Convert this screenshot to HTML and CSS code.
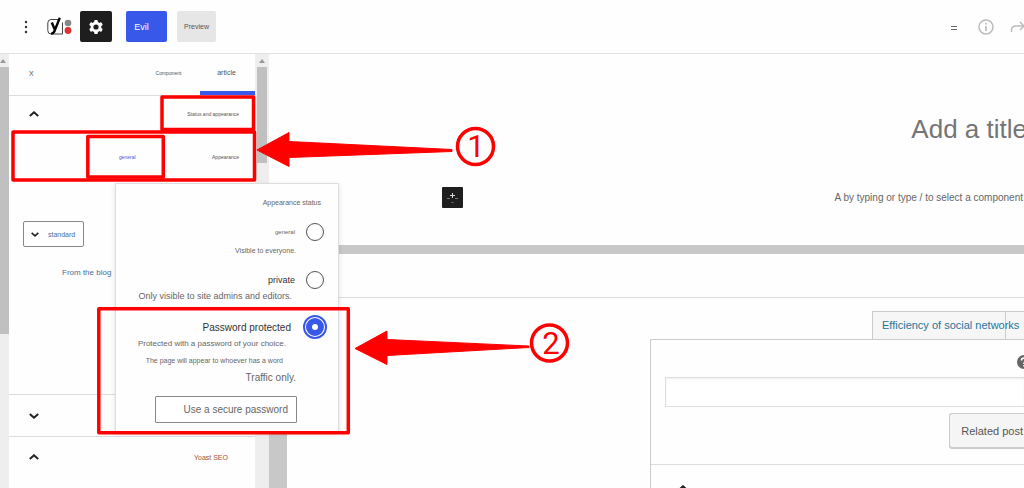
FILE: index.html
```
<!DOCTYPE html>
<html lang="en">
<head>
<meta charset="utf-8">
<meta name="viewport" content="width=device-width, initial-scale=1">
<title>Editor</title>
<link rel="stylesheet" href="styles.css">
</head>
<body>
<div class="app">
  <header class="topbar">
    <button class="icon-btn more" aria-label="More"><svg width="6" height="16" viewBox="0 0 6 16"><g fill="#333"><circle cx="3" cy="3" r="1.2"/><circle cx="3" cy="8" r="1.2"/><circle cx="3" cy="13" r="1.2"/></g></svg></button>
    <button class="icon-btn yoast" aria-label="Yoast"><svg width="26" height="20" viewBox="0 0 26 20"><path d="M11 2.500H4Q0.800 2.500 0.800 6V13.500Q0.800 17 4 17H15.500V5.500" fill="none" stroke="#444" stroke-width="1"/><path d="M4.800 5.500L7.600 12.200" fill="none" stroke="#000" stroke-width="2.400"/><path d="M12.800 0.800L7.900 13Q7.200 16 4.200 16.800" fill="none" stroke="#000" stroke-width="2.400"/><circle cx="21" cy="6" r="3.300" fill="#888"/><circle cx="21" cy="13.500" r="3.400" fill="#dc3232"/></svg></button>
    <button class="icon-btn gear" aria-label="Settings"><svg width="16" height="16" viewBox="0 0 16 16"><g fill="#fff"><circle cx="8" cy="8" r="5.400"/><rect x="6.200" y="1" width="3.600" height="14" rx="1"/><rect x="6.200" y="1" width="3.600" height="14" rx="1" transform="rotate(60 8 8)"/><rect x="6.200" y="1" width="3.600" height="14" rx="1" transform="rotate(120 8 8)"/></g><circle cx="8" cy="8" r="2.600" fill="#1e1e1e"/></svg></button>
    <button class="publish">Evil</button>
    <button class="preview">Preview</button>
    <div class="tools">
      <button class="icon-btn" aria-label="Outline"><svg width="8" height="8" viewBox="0 0 8 8"><path d="M1 3.500H7M1 6.500H7" stroke="#666"/></svg></button>
      <button class="icon-btn" aria-label="Info"><svg width="16" height="16" viewBox="0 0 16 16"><circle cx="8" cy="8" r="7" fill="none" stroke="#bbb" stroke-width="1.500"/><path d="M8 7V12M8 4V5.600" stroke="#bbb" stroke-width="1.700"/></svg></button>
      <button class="icon-btn" aria-label="Redo"><svg width="16" height="12" viewBox="0 0 16 12"><path d="M1.500 11V9Q1.500 5 6 5H14M10 1L14 5L10 9" fill="none" stroke="#bbb" stroke-width="1.500"/></svg></button>
    </div>
  </header>

  <div class="workspace">
    <div class="track page-track"><span class="up"></span><span class="thumb"></span></div>
    <aside class="sidebar">
      <nav class="tabs">
        <button class="close">X</button>
        <button class="tab small">Component</button>
        <button class="tab active">article</button>
      </nav>
      <button class="section-head">
        <svg class="chev" width="10" height="6" viewBox="0 0 10 6"><path d="M0.800 5L5 1.300L9.200 5"/></svg>
        <span>Status and appearance</span>
      </button>
      <div class="setting">
        <a href="#visibility" class="value">general</a>
        <span>Appearance</span>
      </div>
      <div class="format">
        <button class="select-btn"><svg class="chev" width="8" height="5" viewBox="0 0 10 6"><path d="M0.800 1L5 4.700L9.200 1"/></svg>standard</button>
        <p class="blog">From the blog</p>
      </div>
      <button class="section-head collapsed" aria-label="Expand section">
        <svg class="chev" width="10" height="6" viewBox="0 0 10 6"><path d="M0.800 1L5 4.700L9.200 1"/></svg>
      </button>
      <button class="section-head last">
        <svg class="chev" width="10" height="6" viewBox="0 0 10 6"><path d="M0.800 5L5 1.300L9.200 5"/></svg>
        <span class="seo">Yoast SEO</span>
      </button>
    </aside>
    <div class="track side-track"><span class="up"></span><span class="thumb"></span></div>

    <main class="main">
      <section class="canvas">
        <h1>Add a title</h1>
        <div class="block-row">
          <button class="add" aria-label="Add block"><svg width="13" height="13" viewBox="0 0 13 13"><path d="M6.500 2V7M4 4.500H9" stroke="#ddd"/><path d="M1 7.500H4M9 7.500H12M5.500 11.500H7.500" stroke="#777"/></svg></button>
          <p>A by typing or type / to select a component</p>
        </div>
      </section>
      <section class="meta">
        <div class="meta-head"></div>
        <div class="meta-body">
          <nav class="meta-tabs"><a href="#social">Efficiency of social networks</a><a href="#more" aria-label="More"></a></nav>
          <div class="panel">
            <div class="help"><svg width="14" height="14" viewBox="0 0 14 14"><circle cx="7" cy="7" r="7" fill="#666"/><path d="M4.500 5.500Q4.500 3 7 3T9.500 5.500Q9.500 7 7 8V9M7 10V11.500" fill="none" stroke="#fff" stroke-width="1.600"/></svg></div>
            <input class="keyword" type="text" aria-label="Keyword">
            <div class="related-row"><button class="related">Related post</button></div>
            <div class="panel-foot"><svg class="chev" width="10" height="6" viewBox="0 0 10 6"><path d="M0.800 5L5 1.300L9.200 5"/></svg></div>
          </div>
        </div>
      </section>
    </main>
  </div>

  <form class="popover" id="visibility">
    <h2>Appearance status</h2>
    <label class="option"><span class="t6">general</span><input type="radio" name="vis"></label>
    <p class="t7 visible">Visible to everyone.</p>
    <label class="option private"><span class="t9">private</span><input type="radio" name="vis"></label>
    <p class="t9 only">Only visible to site admins and editors.</p>
    <label class="option protected"><span class="t10">Password protected</span><input type="radio" name="vis" checked></label>
    <p class="t8 choice">Protected with a password of your choice.</p>
    <p class="t7 word">The page will appear to whoever has a word</p>
    <p class="t10 traffic">Traffic only.</p>
    <input class="password" type="text" placeholder="Use a secure password" aria-label="Use a secure password">
  </form>

  <svg class="marks" width="600" height="488" viewBox="0 0 600 488">
    <g fill="none" stroke="#f00" stroke-width="3.500" stroke-linejoin="round">
      <rect x="162" y="97" width="91.500" height="32.500"/>
      <rect x="13" y="132" width="241.500" height="48"/>
      <rect x="87.800" y="136.500" width="75.500" height="40.500"/>
      <rect x="98.800" y="308.800" width="249.500" height="124"/>
      <circle cx="475.500" cy="146.500" r="18"/>
      <circle cx="549.500" cy="343" r="18"/>
    </g>
    <g fill="#f00" stroke="#f00" stroke-linejoin="round">
      <path d="M257 150L289 132.500V141.500L452 149.500V151.500L289 157.500V166.500Z"/>
      <path d="M355 348.500L387 331V339.500L529 346V347.500L387 355.500V364.500Z"/>
    </g>
    <g class="numbers"><text x="476" y="157">1</text><text x="551" y="354">2</text></g>
  </svg>
</div>
</body>
</html>
```
FILE: styles.css
```
* { box-sizing: border-box; }
body { margin: 0; font-family: "Liberation Sans", Arial, sans-serif; background: #fefefe; color: #555; }
button, input { font: inherit; color: inherit; }
button { border: 0; background: none; padding: 0; }
h1, h2, p { margin: 0; font-weight: 400; }
a { text-decoration: none; }
svg { display: block; }
.app { position: relative; height: 100vh; overflow: hidden; display: flex; flex-direction: column; }

.topbar { flex: none; height: 54px; display: flex; align-items: center; border-bottom: 1px solid #e2e2e2; padding-left: 23px; }
.yoast { margin: 0 7px 0 18px; }
.gear { width: 32px; height: 31px; display: grid; place-items: center; background: #1e1e1e; border-radius: 2px; }
.publish { width: 41px; height: 31px; margin: 0 10px 0 14px; padding-right: 10px; background: #3858e9; color: #fff; font-size: 9px; border-radius: 2px; }
.preview { width: 39px; height: 31px; background: #e6e6e6; font-size: 7px; border-radius: 2px; }
.tools { margin-left: auto; display: flex; align-items: center; gap: 20px; margin-right: -2px; }
.tools .icon-btn:last-child { margin-left: -4px; }

.workspace { flex: 1; min-height: 0; display: flex; }
.track { background: #eee; display: flex; flex-direction: column; align-items: center; flex: none; }
.up { margin: 5px 0 4px; border: 3px solid transparent; border-top: 0; border-bottom: 4px solid #999; }
.thumb { width: 100%; background: #c0c0c0; }
.page-track { width: 9px; }
.page-track .thumb { height: 267px; }
.page-track .up { margin-left: -3px; }
.side-track { width: 14px; padding: 0 2px; }
.side-track .thumb { height: 96px; }

.sidebar { width: 246px; flex: none; display: flex; flex-direction: column; }
.tabs { height: 42px; display: flex; border-bottom: 1px solid #ddd; font-size: 7px; }
.close { margin: 0 auto 0 20px; padding-bottom: 3px; }
.tab { width: 55px; padding: 0 2px 3px 0; }
.tab.small { font-size: 5px; padding-right: 8px; }
.tab.active { border-bottom: 4px solid #3858e9; padding-bottom: 0; }
.section-head { height: 36px; flex: none; display: flex; align-items: center; justify-content: space-between; padding: 0 16px 0 20px; font-size: 5px; }
.chev { fill: none; stroke: #222; stroke-width: 2; }
.setting { height: 50px; display: flex; align-items: center; justify-content: space-between; padding: 0 16px 0 110px; font-size: 5px; }
.value { color: #3858e9; }
.format { height: 212px; padding: 39px 0 0 14px; color: #4d6d99; }
.select-btn { width: 61px; height: 26px; display: flex; align-items: center; gap: 9px; padding-left: 7px; border: 1px solid #888; border-radius: 2px; font-size: 7px; }
.blog { font-size: 8px; line-height: 10px; margin: 21px 0 0 39px; }
.collapsed { height: 43px; border: solid #ddd; border-width: 1px 0; }
.last { height: 40px; padding-right: 27px; }
.seo { font-size: 7px; color: #a0543c; }

.main { flex: 1; min-width: 0; overflow: hidden; display: flex; flex-direction: column; }
.canvas { flex: none; height: 191px; }
h1 { text-align: right; font-size: 26px; line-height: 30px; margin: 60px -3px 0 0; color: #757575; white-space: nowrap; }
.block-row { display: flex; align-items: center; justify-content: space-between; margin-top: 43px; padding: 0 1px 0 173px; }
.add { width: 21px; height: 21px; display: grid; place-items: center; background: #1e1e1e; border-radius: 1px; }
.block-row p { font-size: 10px; line-height: 12px; color: #666; }
.meta { flex: 1; border-top: 9px solid #c8c8c8; border-left: 18px solid #c8c8c8; display: flex; flex-direction: column; }
.meta-head { height: 44px; flex: none; border-bottom: 1px solid #ddd; }
.meta-body { flex: 1; display: flex; flex-direction: column; padding: 13px 0 0 363px; }
.meta-tabs { display: flex; justify-content: flex-end; height: 28px; }
.meta-tabs a { width: 133px; flex: none; border: 1px solid #ccc; border-bottom: 0; background: #f6f6f6; color: #24759b; font-size: 11px; line-height: 26px; padding-left: 9px; white-space: nowrap; }
.meta-tabs a:first-child { position: relative; border-right: 0; }
.meta-tabs a:last-child { width: 19px; border-right: 0; }
.panel { flex: 1; border: 1px solid #ccc; border-width: 1px 0 0 1px; }
.help { display: flex; justify-content: flex-end; margin: 15px -7px 0 0; }
.keyword { display: block; width: calc(100% - 14px); height: 30px; margin: 8px 0 0 14px; border: 1px solid #ddd; border-right: 0; background: #fff; box-shadow: inset 0 1px 2px #eee; }
.related-row { display: flex; justify-content: flex-end; padding: 6px 0 16px; border-bottom: 1px solid #ddd; }
.related { height: 35px; padding: 0 1px 0 11px; border: 1px solid #ccc; border-right: 0; border-radius: 3px 0 0 3px; background: #f5f5f5; box-shadow: 0 1px 0 #ccc; font-size: 11px; white-space: nowrap; }
.panel-foot { padding: 20px 0 0 27px; }

.popover { position: absolute; left: 115px; top: 183px; width: 224px; height: 249px; padding: 15px 14px 0; background: #fefefe; border: 1px solid #ddd; box-shadow: 0 2px 5px rgba(0,0,0,.12); display: flex; flex-direction: column; text-align: right; color: #666; }
h2 { font-size: 7px; line-height: 8px; padding-right: 3px; }
.option { height: 20px; margin-top: 15px; display: flex; justify-content: flex-end; align-items: center; gap: 11px; }
.option input { appearance: none; width: 18px; height: 18px; margin: 0; border: 1px solid #555; border-radius: 50%; }
.option input:checked { border: 6px solid #3858e9; outline: 2px solid #3858e9; outline-offset: 1px; }
.t6 { font-size: 6px; }
.t7 { font-size: 7px; }
.t8 { font-size: 8px; }
.t9 { font-size: 9px; }
.t10 { font-size: 10px; }
.popover p { line-height: 10px; padding-right: 28px; white-space: nowrap; }
.option.private { margin-top: 14px; color: #333; }
.option.protected { margin-top: 16px; gap: 15px; color: #333; }
.popover .visible { margin-top: 4px; }
.popover .only { margin-top: 1px; padding-right: 32px; }
.popover .choice { margin-top: 2px; padding-right: 38px; }
.popover .word { margin-top: 7px; padding-right: 41px; }
.popover .traffic { margin-top: 7px; }
.password { width: 142px; height: 27px; margin: 13px 27px 0 auto; padding: 0 8px; border: 1px solid #888; border-radius: 1px; background: #fff; font-size: 10px; text-align: right; }
.password::placeholder { color: #666; opacity: 1; }

.marks { position: absolute; left: 0; top: 0; pointer-events: none; }
.numbers { fill: #f00; font-family: Roboto, sans-serif; font-size: 31px; text-anchor: middle; }
```
